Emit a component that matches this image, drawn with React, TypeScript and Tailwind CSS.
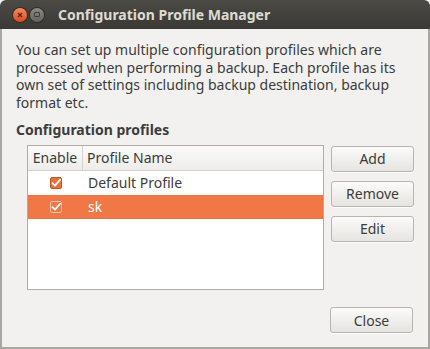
import { useState } from "react";

const font = { fontFamily: '"Noto Sans", "Open Sans", sans-serif' };

function CheckBox({ inverted = false }: { inverted?: boolean }) {
  return (
    <svg width="12" height="12" viewBox="0 0 12 12">
      <rect
        x="0.5"
        y="0.5"
        width="11"
        height="11"
        rx="1.5"
        fill={inverted ? "#f07746" : "#e8703a"}
        stroke={inverted ? "#f6c3aa" : "#c4561f"}
      />
      <path
        d="M2.5 6.2 L5 8.6 L10.2 2.6"
        fill="none"
        stroke="#ffffff"
        strokeWidth="1.8"
        strokeLinecap="round"
        strokeLinejoin="round"
      />
    </svg>
  );
}

function GtkButton({ label, className = "" }: { label: string; className?: string }) {
  return (
    <button
      className={
        "flex h-[26px] w-[83px] items-center justify-center rounded-[3px] border border-[#b8b5af] bg-gradient-to-b from-[#fbfbfa] to-[#e6e4e1] text-[14px] text-[#3c3c3c] shadow-[0_1px_0_rgba(255,255,255,0.8)] " +
        className
      }
    >
      {label}
    </button>
  );
}

export default function App() {
  const [selected, setSelected] = useState(1);
  const profiles = ["Default Profile", "sk"];

  return (
    <div className="h-[349px] w-[430px] overflow-hidden bg-[#f2f1f0]" style={font}>
      {/* title bar */}
      <div className="flex h-[29px] items-center rounded-t-[6px] bg-gradient-to-b from-[#4b4a45] to-[#3a3935] pl-[13px]">
        <div className="flex h-[14px] w-[14px] items-center justify-center rounded-full bg-gradient-to-b from-[#f58a5f] to-[#df4a16] shadow-[0_0_0_1px_#3a2b24]">
          <svg width="6" height="6" viewBox="0 0 6 6">
            <path d="M1 1 L5 5 M5 1 L1 5" stroke="#5a2614" strokeWidth="1.4" />
          </svg>
        </div>
        <div className="ml-[3px] flex h-[14px] w-[14px] items-center justify-center rounded-full bg-gradient-to-b from-[#8d8b85] to-[#64625d] shadow-[0_0_0_1px_#2e2d2a]">
          <div className="h-[5px] w-[6px] rounded-[1px] border border-[#3e3d39]" />
        </div>
        <span className="ml-[14px] text-[14px] font-bold text-[#dfdbd2]">
          Configuration Profile Manager
        </span>
      </div>

      {/* body */}
      <div className="flex h-[320px] flex-col border-x-2 border-b-2 border-[#a9a7a2] px-[14px] pt-[12px] pb-[14px] text-[#3c3c3c]">
        <p className="text-[14px] leading-[17.7px]">
          You can set up multiple configuration profiles which are processed when performing a
          backup. Each profile has its own set of settings including backup destination, backup
          format etc.
        </p>
        <div className="mt-[9px] text-[14px] font-bold leading-[18px]">Configuration profiles</div>

        <div className="mt-[6px] flex gap-[7px] pl-[11px]">
          <div className="h-[145px] w-[297px] border border-[#b0ada7] bg-white">
            <div className="flex h-[25px] border-b border-[#d4d2ce] bg-gradient-to-b from-[#fafaf9] to-[#eeedeb] text-[14px]">
              <div className="flex w-[55px] items-center justify-center border-r border-[#d4d2ce]">
                Enable
              </div>
              <div className="flex items-center pl-[4px]">Profile Name</div>
            </div>
            {profiles.map((name, i) => (
              <div
                key={name}
                onClick={() => setSelected(i)}
                className={
                  "flex h-[24px] items-center text-[14px] " +
                  (selected === i ? "bg-[#f07746] text-white" : "")
                }
              >
                <div className="flex w-[55px] justify-center">
                  <CheckBox inverted={selected === i} />
                </div>
                <div className="pl-[5px]">{name}</div>
              </div>
            ))}
          </div>

          <div className="flex flex-col gap-[9px] pt-[1px]">
            <GtkButton label="Add" />
            <GtkButton label="Remove" />
            <GtkButton label="Edit" />
          </div>
        </div>

        <div className="mt-auto flex justify-end pr-[1px]">
          <GtkButton label="Close" />
        </div>
      </div>
    </div>
  );
}
